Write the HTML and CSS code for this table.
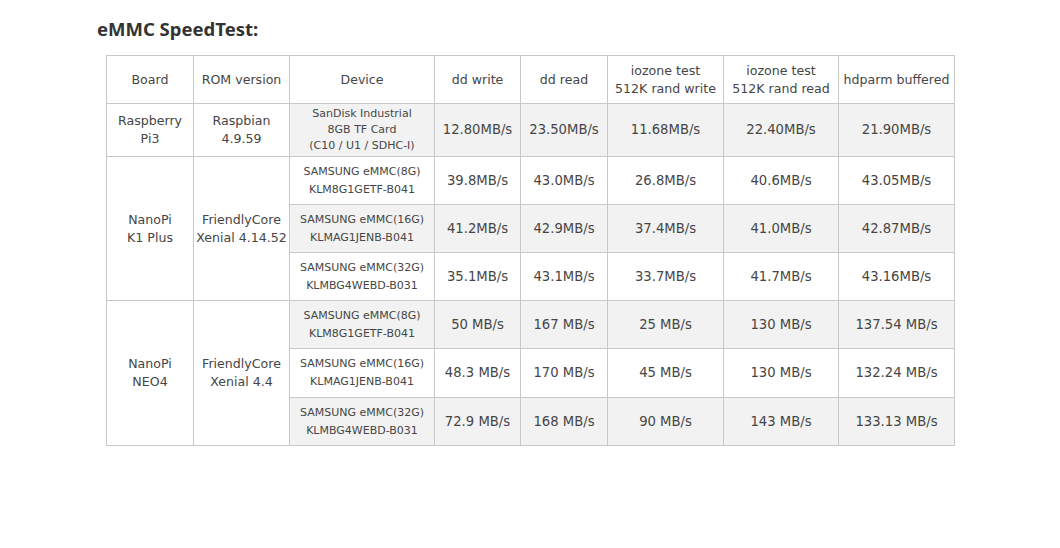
FILE: index.html
```html
<!DOCTYPE html>
<html>
<head>
<meta charset="utf-8">
<link rel="stylesheet" href="styles.css">
</head>
<body>
<div class="page">
  <h2 class="title">eMMC SpeedTest:</h2>
  <table class="speed">
    <colgroup>
      <col class="c-board">
      <col class="c-rom">
      <col class="c-dev">
      <col class="c-ddw">
      <col class="c-ddr">
      <col class="c-izw">
      <col class="c-izr">
      <col class="c-hd">
    </colgroup>
    <tr class="head">
      <td>Board</td>
      <td>ROM version</td>
      <td>Device</td>
      <td>dd write</td>
      <td>dd read</td>
      <td>iozone test<br>512K rand write</td>
      <td>iozone test<br>512K rand read</td>
      <td>hdparm buffered</td>
    </tr>
    <tr class="rpi shade">
      <td class="fixed">Raspberry<br>Pi3</td>
      <td class="fixed">Raspbian<br>4.9.59</td>
      <td class="dev sd">SanDisk Industrial<br>8GB TF Card<br>(C10 / U1 / SDHC-I)</td>
      <td class="num">12.80MB/s</td>
      <td class="num">23.50MB/s</td>
      <td class="num">11.68MB/s</td>
      <td class="num">22.40MB/s</td>
      <td class="num">21.90MB/s</td>
    </tr>
    <tr>
      <td class="fixed" rowspan="3">NanoPi<br>K1 Plus</td>
      <td class="fixed" rowspan="3">FriendlyCore<br>Xenial 4.14.52</td>
      <td class="dev">SAMSUNG eMMC(8G)<br>KLM8G1GETF-B041</td>
      <td class="num">39.8MB/s</td>
      <td class="num">43.0MB/s</td>
      <td class="num">26.8MB/s</td>
      <td class="num">40.6MB/s</td>
      <td class="num">43.05MB/s</td>
    </tr>
    <tr class="shade">
      <td class="dev">SAMSUNG eMMC(16G)<br>KLMAG1JENB-B041</td>
      <td class="num">41.2MB/s</td>
      <td class="num">42.9MB/s</td>
      <td class="num">37.4MB/s</td>
      <td class="num">41.0MB/s</td>
      <td class="num">42.87MB/s</td>
    </tr>
    <tr>
      <td class="dev">SAMSUNG eMMC(32G)<br>KLMBG4WEBD-B031</td>
      <td class="num">35.1MB/s</td>
      <td class="num">43.1MB/s</td>
      <td class="num">33.7MB/s</td>
      <td class="num">41.7MB/s</td>
      <td class="num">43.16MB/s</td>
    </tr>
    <tr class="shade">
      <td class="fixed" rowspan="3">NanoPi<br>NEO4</td>
      <td class="fixed" rowspan="3">FriendlyCore<br>Xenial 4.4</td>
      <td class="dev">SAMSUNG eMMC(8G)<br>KLM8G1GETF-B041</td>
      <td class="num">50 MB/s</td>
      <td class="num">167 MB/s</td>
      <td class="num">25 MB/s</td>
      <td class="num">130 MB/s</td>
      <td class="num">137.54 MB/s</td>
    </tr>
    <tr class="tall">
      <td class="dev">SAMSUNG eMMC(16G)<br>KLMAG1JENB-B041</td>
      <td class="num">48.3 MB/s</td>
      <td class="num">170 MB/s</td>
      <td class="num">45 MB/s</td>
      <td class="num">130 MB/s</td>
      <td class="num">132.24 MB/s</td>
    </tr>
    <tr class="shade">
      <td class="dev">SAMSUNG eMMC(32G)<br>KLMBG4WEBD-B031</td>
      <td class="num">72.9 MB/s</td>
      <td class="num">168 MB/s</td>
      <td class="num">90 MB/s</td>
      <td class="num">143 MB/s</td>
      <td class="num">133.13 MB/s</td>
    </tr>
  </table>
</div>
</body>
</html>
```
FILE: styles.css
```css
html, body {
  margin: 0;
  padding: 0;
  background: #ffffff;
}
.page {
  padding: 16px 0 0 97px;
}
.title {
  margin: 0 0 13px 0;
  font-family: "Noto Sans", "Open Sans", sans-serif;
  font-weight: 700;
  font-size: 18.5px;
  line-height: 26px;
  color: #333333;
}
.speed {
  margin-left: 9px;
  border-collapse: collapse;
  table-layout: fixed;
  width: 848px;
  font-family: "DejaVu Sans", Verdana, sans-serif;
  font-size: 12.6px;
  color: #464646;
}
.c-board { width: 87px; }
.c-rom { width: 96px; }
.c-dev { width: 145px; }
.c-ddw { width: 86px; }
.c-ddr { width: 87px; }
.c-izw { width: 116px; }
.c-izr { width: 115px; }
.c-hd { width: 116px; }
.speed td {
  border: 1px solid #c8c8c8;
  text-align: center;
  vertical-align: middle;
  padding: 0;
  line-height: 18px;
  white-space: nowrap;
}
.speed tr { height: 48px; }
.speed tr.rpi { height: 53px; }
.speed tr.tall { height: 49px; }
.speed tr.shade td { background: #f2f2f2; }
.speed tr.shade td.fixed { background: #ffffff; }
.speed td.num {
  font-size: 13.2px;
}
.speed td.dev {
  font-size: 11px;
  line-height: 18px;
}
.speed td.dev.sd {
  line-height: 16px;
}
```
